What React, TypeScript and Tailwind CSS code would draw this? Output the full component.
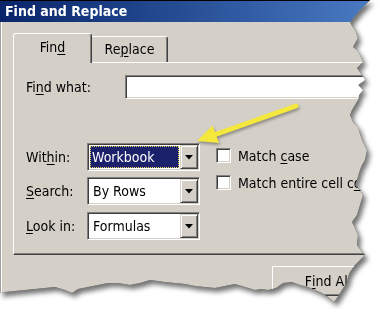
import React from "react";

const U = ({ children }: { children: React.ReactNode }) => (
  <span className="underline underline-offset-[2px] decoration-1">{children}</span>
);

const Triangle = () => (
  <svg width="8" height="5" viewBox="0 0 8 5">
    <polygon points="0,0 8,0 4,4.5" fill="#000" />
  </svg>
);

const Combo = ({ value, selected }: { value: string; selected?: boolean }) => (
  <div className="w-[113px] h-[28px] border border-t-[#808080] border-l-[#808080] border-b-white border-r-white shadow-[inset_1px_1px_0_#404040,inset_-1px_-1px_0_#d4d0c8] p-[1px] flex">
    <div className="flex-1 bg-white flex items-stretch p-[1px]">
      {selected ? (
        <div className="flex-1 bg-[#1c216c] text-white flex items-center pl-[2px] outline outline-1 outline-dotted outline-[#e8d860] -outline-offset-1">
          {value}
        </div>
      ) : (
        <div className="flex-1 flex items-center pl-[3px] text-black">{value}</div>
      )}
    </div>
    <div className="w-[18px] bg-[#d4d0c8] border border-t-[#d4d0c8] border-l-[#d4d0c8] border-b-[#404040] border-r-[#404040] shadow-[inset_1px_1px_0_#ffffff,inset_-1px_-1px_0_#808080] flex items-center justify-center">
      <Triangle />
    </div>
  </div>
);

const Check = ({ children }: { children: React.ReactNode }) => (
  <div className="flex items-center h-[15px] whitespace-nowrap">
    <div className="w-[15px] h-[15px] bg-white border border-t-[#808080] border-l-[#808080] border-b-white border-r-white shadow-[inset_1px_1px_0_#404040,inset_-1px_-1px_0_#d4d0c8] shrink-0" />
    <span className="ml-[7px] leading-none">{children}</span>
  </div>
);

export default function App() {
  return (
    <div className="w-[379px] h-[309px] bg-white relative overflow-hidden font-['DejaVu_Sans_Condensed','Liberation_Sans',sans-serif] text-[14px] text-black">
      <div className="[filter:drop-shadow(0_0_0.6px_rgba(0,0,0,0.7))_drop-shadow(3px_4px_2.5px_rgba(0,0,0,0.55))]">
        <div className="w-[379px] h-[309px] overflow-hidden bg-[#d4d0c8] shadow-[inset_1px_0_0_#a0a0a0,inset_2px_0_0_#ffffff] flex flex-col [clip-path:polygon(0_0,370px_0,366px_4px,360px_10px,355px_16px,350px_22px,352px_26px,355px_30px,358px_38px,353px_47px,357px_50px,360px_55px,363px_62px,357px_68px,362px_75px,365px_80px,358px_85px,363px_90px,359px_95px,358px_100px,355px_105px,352px_110px,350px_115px,353px_122px,358px_127px,360px_134px,362px_140px,367px_150px,365px_160px,362px_165px,360px_170px,357px_180px,355px_185px,360px_190px,363px_195px,360px_205px,357px_215px,352px_222px,355px_228px,358px_235px,357px_245px,362px_252px,365px_255px,360px_260px,355px_265px,350px_272px,348px_277px,347px_282px,342px_290px,337px_298px,334px_302px,328px_297px,322px_293px,315px_290px,308px_287px,300px_285px,292px_282px,283px_283px,276px_288px,268px_290px,261px_289px,255px_290px,245px_287px,235px_284px,225px_286px,215px_288px,205px_287px,195px_286px,185px_284px,175px_283px,165px_282px,158px_281px,150px_280px,140px_283px,130px_285px,118px_283px,108px_283px,98px_285px,88px_287px,78px_289px,72px_293px,65px_290px,55px_287px,45px_288px,35px_289px,25px_290px,15px_291px,5px_292px,0_293px)]">
          {/* Title bar */}
          <div className="h-[22px] shrink-0 border-t border-black bg-gradient-to-r from-[#0a246a] to-[#4a7cc4] flex items-center pl-[5px] text-white font-bold text-[14px]">
            Find and Replace
          </div>

          {/* Tabs */}
          <div className="h-[40px] shrink-0 flex items-end pl-[13px]">
            <div className="relative z-10 w-[79px] h-[30px] -mb-[1px] bg-[#d4d0c8] border-t border-l border-r border-t-white border-l-white border-r-[#404040] rounded-t-[3px] shadow-[inset_-1px_0_0_#808080] flex items-center justify-center pb-[2px]">
              Fin<U>d</U>
            </div>
            <div className="w-[76px] h-[26px] bg-[#d4d0c8] border-t border-r border-t-white border-r-[#404040] rounded-tr-[3px] shadow-[inset_-1px_0_0_#808080] flex items-center justify-center">
              Re<U>p</U>lace
            </div>
          </div>

          {/* Panel */}
          <div className="ml-[13px] w-[400px] h-[193px] shrink-0 border-t border-l border-b border-t-white border-l-white border-b-[#404040] shadow-[inset_0_-1px_0_#808080] pl-[12px] pt-[12px] flex flex-col">
            <div className="h-[24px] flex items-center">
              <div className="w-[99px]">
                Fi<U>n</U>d what:
              </div>
              <div className="w-[260px] h-[24px] bg-white border border-t-[#808080] border-l-[#808080] border-b-white border-r-white shadow-[inset_1px_1px_0_#404040,inset_-1px_-1px_0_#d4d0c8]" />
            </div>

            <div className="mt-[44px] flex">
              <div className="flex flex-col">
                <div className="h-[28px] flex items-center">
                  <div className="w-[61px]">
                    Wit<U>h</U>in:
                  </div>
                  <Combo value="Workbook" selected />
                </div>
                <div className="mt-[6px] h-[28px] flex items-center">
                  <div className="w-[61px]">
                    <U>S</U>earch:
                  </div>
                  <Combo value="By Rows" />
                </div>
                <div className="mt-[7px] h-[28px] flex items-center">
                  <div className="w-[61px]">
                    <U>L</U>ook in:
                  </div>
                  <Combo value="Formulas" />
                </div>
              </div>
              <div className="ml-[16px] mt-[5px] w-[146px] overflow-hidden flex flex-col gap-[12px]">
                <Check>
                  Match <U>c</U>ase
                </Check>
                <Check>
                  Match entire cell c<U>o</U>ntents
                </Check>
              </div>
            </div>
          </div>

          {/* Buttons */}
          <div className="mt-[11px] ml-[272px] w-[112px] h-[30px] shrink-0 border border-t-white border-l-white border-b-[#404040] border-r-[#404040] shadow-[inset_-1px_-1px_0_#808080] flex items-center justify-center">
            F<U>i</U>nd All
          </div>
        </div>
      </div>

      {/* Yellow arrow */}
      <svg
        className="absolute left-0 top-0 pointer-events-none [filter:drop-shadow(1px_2px_1.5px_rgba(0,0,0,0.35))]"
        width="379"
        height="309"
        viewBox="0 0 379 309"
      >
        <line x1="296" y1="106" x2="214" y2="135" stroke="#f5e83c" strokeWidth="5" strokeLinecap="round" />
        <polygon points="197,141 212.5,125.5 219,143" fill="#f5e83c" />
      </svg>
    </div>
  );
}
